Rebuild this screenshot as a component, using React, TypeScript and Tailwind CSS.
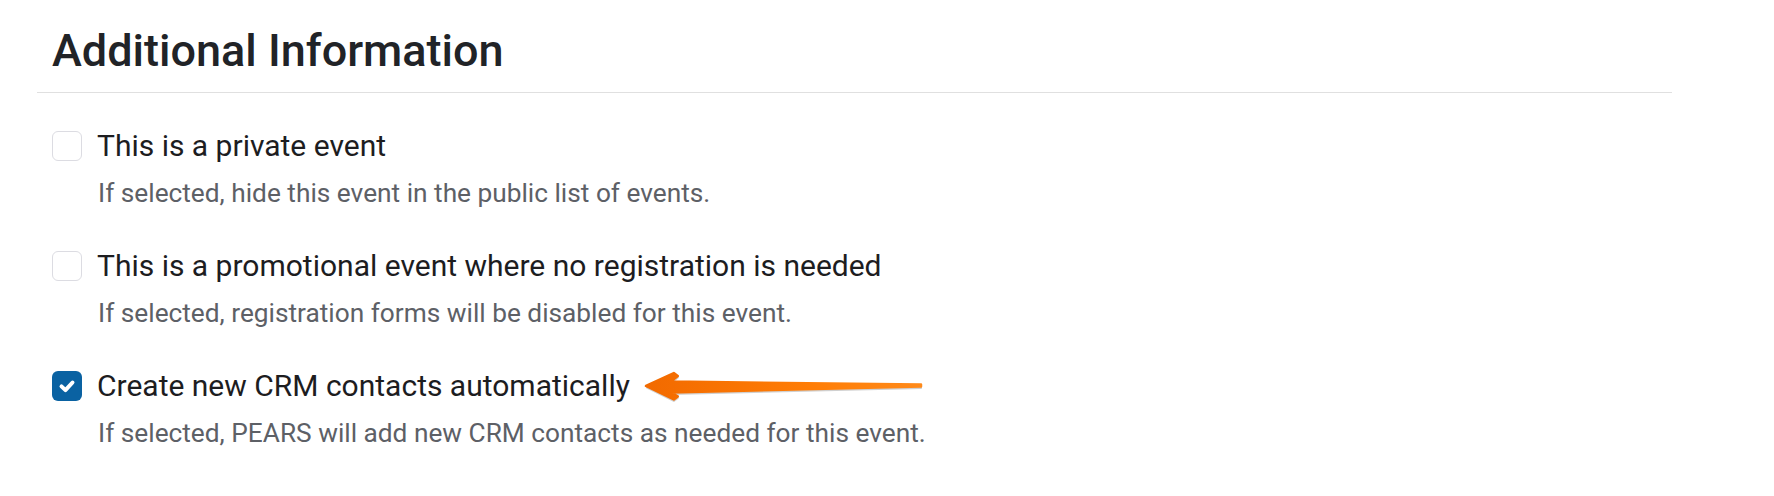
type Option = {
  label: string
  hint: string
  checked: boolean
  arrow?: boolean
}

const OPTIONS: Option[] = [
  {
    label: 'This is a private event',
    hint: 'If selected, hide this event in the public list of events.',
    checked: false,
  },
  {
    label: 'This is a promotional event where no registration is needed',
    hint: 'If selected, registration forms will be disabled for this event.',
    checked: false,
  },
  {
    label: 'Create new CRM contacts automatically',
    hint: 'If selected, PEARS will add new CRM contacts as needed for this event.',
    checked: true,
    arrow: true,
  },
]

function Arrow() {
  return (
    <svg width="280" height="34" viewBox="0 0 282 34" className="ml-[14px] flex-none" aria-hidden>
      <defs>
        <linearGradient id="arrowFill" x1="0" y1="0" x2="1" y2="0">
          <stop offset="0" stopColor="#f26a00" />
          <stop offset="0.6" stopColor="#ff7d05" />
          <stop offset="1" stopColor="#ff8a1a" />
        </linearGradient>
      </defs>
      {/* shadow */}
      <path
        d="M3 18.5 L30 5.5 L34 8.5 L27.5 14 L279 17 L279 19 L27.5 25 L34 29 L30 32 Z"
        fill="#7a7a7a"
        opacity="0.35"
        stroke="#7a7a7a"
        strokeWidth="2"
        strokeLinejoin="round"
      />
      <path
        d="M2 17 L30 4 L34 7 L27 12.5 L279 15.5 L279 17.5 L27 23.5 L34 27.5 L30 30.5 Z"
        fill="url(#arrowFill)"
        stroke="url(#arrowFill)"
        strokeWidth="2.5"
        strokeLinejoin="round"
      />
    </svg>
  )
}

function CheckMark() {
  return (
    <svg width="22" height="22" viewBox="0 0 20 20" aria-hidden>
      <path
        d="M5 10.3 L8.6 13.8 L15 6.8"
        fill="none"
        stroke="#fff"
        strokeWidth="3.6"
        strokeLinecap="round"
        strokeLinejoin="round"
      />
    </svg>
  )
}

export default function App() {
  return (
    <main className="min-h-screen bg-white pt-[24px] font-['Roboto','Liberation_Sans',sans-serif]">
      <section className="ml-[37px] w-[1635px]">
        <h2 className="pl-[15px] text-[45px] leading-[54px] font-medium text-[#212327] pb-[14px] border-b border-[#e0e0e0]">
          Additional Information
        </h2>

        <div className="pl-[15px] pt-[38px] flex flex-col gap-[43px]">
          {OPTIONS.map((o) => (
            <div key={o.label}>
              <div className="flex items-center h-[30px]">
                {o.checked ? (
                  <span className="w-[30px] h-[30px] flex-none rounded-[6px] bg-[#0a62a2] flex items-center justify-center">
                    <CheckMark />
                  </span>
                ) : (
                  <span className="w-[30px] h-[30px] flex-none rounded-[6px] bg-white border border-[#dcdce2]" />
                )}
                <span className="ml-[15px] text-[30px] leading-[30px] text-[#1d1d1f] whitespace-nowrap">
                  {o.label}
                </span>
                {o.arrow && <Arrow />}
              </div>
              <div className="mt-[17px] pl-[46px] text-[26.25px] leading-[30px] text-[#5d6066] whitespace-nowrap">
                {o.hint}
              </div>
            </div>
          ))}
        </div>
      </section>
    </main>
  )
}
